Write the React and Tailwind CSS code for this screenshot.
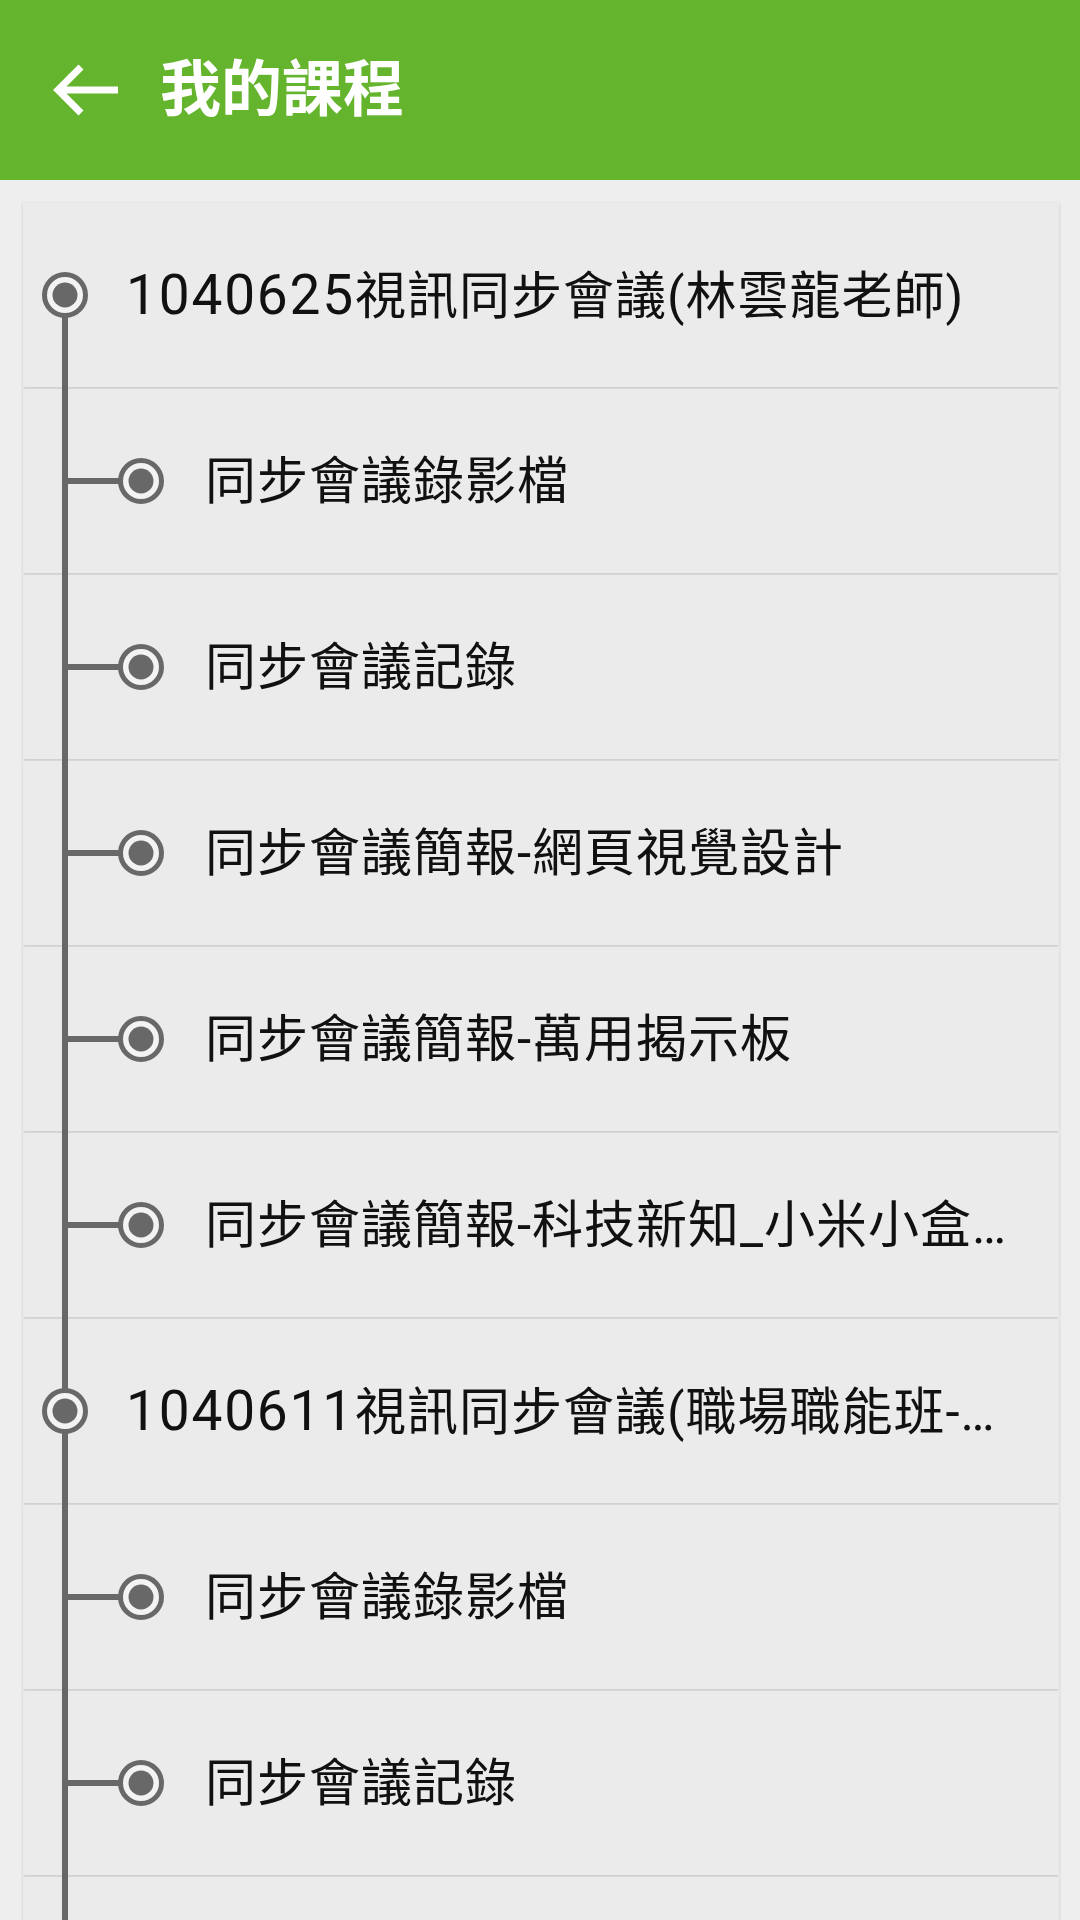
const rows = [
  { level: 1, code: '1040625', title: '視訊同步會議(林雲龍老師)' },
  { level: 2, title: '同步會議錄影檔' },
  { level: 2, title: '同步會議記錄' },
  { level: 2, title: '同步會議簡報-網頁視覺設計' },
  { level: 2, title: '同步會議簡報-萬用揭示板' },
  { level: 2, title: '同步會議簡報-科技新知_小米小盒…' },
  { level: 1, code: '1040611', title: '視訊同步會議(職場職能班-…' },
  { level: 2, title: '同步會議錄影檔' },
  { level: 2, title: '同步會議記錄' },
  { level: 2, title: '' },
];

const GRAY = '#686868';

function Node({ cx, cy }) {
  return (
    <g>
      <circle cx={cx} cy={cy} r="20.5" fill="#f3f3f3" stroke={GRAY} strokeWidth="5" />
      <circle cx={cx} cy={cy} r="12.5" fill={GRAY} />
    </g>
  );
}

// tree connector: rail on the left, knob for the node
function Rail({ level, first }) {
  const w = level === 1 ? 103 : 182;
  return (
    <svg width={w} height="184" viewBox={`0 0 ${w} 184`} className="shrink-0 overflow-visible">
      <rect x="39" y={first ? 92 : -2} width="6" height={first ? 94 : 188} fill={GRAY} />
      {level === 2 && <rect x="42" y="89" width="56" height="6" fill={GRAY} />}
      <Node cx={level === 1 ? 42 : 118} cy={92} />
    </svg>
  );
}

export default function App() {
  return (
    <div className="h-[1920px] w-[1080px] overflow-hidden bg-[#eeeeee] font-[Roboto,'Noto_Sans_CJK_TC',sans-serif]">
      {/* App bar */}
      <header className="flex h-[180px] items-center bg-[#65b42e]">
        <svg width="70" height="52" viewBox="0 0 70 52" className="ml-[50px] shrink-0">
          <path d="M8 26H68M31 3L8 26L31 49" fill="none" stroke="#ffffff" strokeWidth="7" strokeLinejoin="miter" />
        </svg>
        <h1 className="ml-[40px] text-[61px] font-bold leading-none text-white">我的課程</h1>
      </header>

      {/* Course tree */}
      <div className="flex flex-col gap-[2px] pl-[23px] pr-[21px] pt-[23px]">
        {rows.map((row, i) => (
          <div
            key={i}
            className="flex h-[184px] shrink-0 items-center bg-[#ebebeb] shadow-[0_1px_3px_rgba(0,0,0,0.18)]"
          >
            <Rail level={row.level} first={i === 0} />
            <span className="whitespace-nowrap text-[51px] leading-none tracking-[1px] text-[#111111]">
              {row.code && <span className="text-[55px] tracking-[1.8px]">{row.code}</span>}
              {row.title}
            </span>
          </div>
        ))}
      </div>
    </div>
  );
}
